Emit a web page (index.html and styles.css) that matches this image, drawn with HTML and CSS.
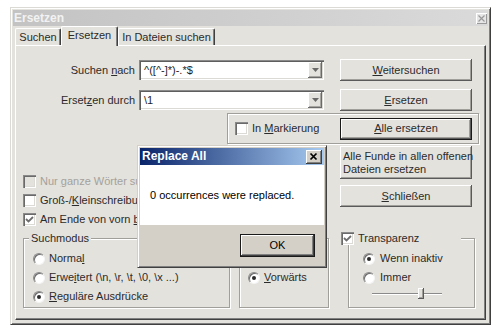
FILE: index.html
```html
<!DOCTYPE html>
<html lang="de">
<head>
	<meta charset="UTF-8">
	<title>Ersetzen</title>
	<link rel="stylesheet" href="styles.css">
</head>
<body>

	<!-- main window (inactive) -->
	<div class="window">
		<div class="titlebar">
			<span class="title">Ersetzen</span>
			<span class="title-close">
				<svg width="7" height="7" viewBox="0 0 7 7"><path d="M0.5 0.5 L6.5 6.5 M6.5 0.5 L0.5 6.5" stroke="#9a9a9a" stroke-width="1.2" fill="none"/></svg>
			</span>
		</div>

		<div class="tabs">
			<span class="tab tab-find">Suchen</span>
			<span class="tab tab-replace active">Ersetzen</span>
			<span class="tab tab-files">In Dateien suchen</span>
		</div>

		<div class="panel">

			<div class="row">
				<label class="label">Suchen <u>n</u>ach</label>
				<div class="combo">
					<span class="combo-text">^([^-]*)-.*$</span>
					<span class="combo-btn"><svg width="7" height="4" viewBox="0 0 7 4"><path d="M0 0 H7 L3.5 4 Z" fill="#6a6a6a"/></svg></span>
				</div>
				<button type="button" class="btn"><span><u>W</u>eitersuchen</span></button>
			</div>

			<div class="row">
				<label class="label">Erset<u>z</u>en durch</label>
				<div class="combo">
					<span class="combo-text">\1</span>
					<span class="combo-btn"><svg width="7" height="4" viewBox="0 0 7 4"><path d="M0 0 H7 L3.5 4 Z" fill="#6a6a6a"/></svg></span>
				</div>
				<button type="button" class="btn"><span><u>E</u>rsetzen</span></button>
			</div>

			<div class="mark">
				<span class="check-label">
					<span class="chk"></span>
					<span class="txt">In <u>M</u>arkierung</span>
				</span>
				<button type="button" class="btn default"><span><u>A</u>lle ersetzen</span></button>
			</div>

			<div class="mid">
				<!-- options are cut off by the message box -->
				<div class="opts">
					<div class="opt disabled">
						<span class="chk off"></span>
						<span class="txt">Nur <u>g</u>anze Wörter suchen</span>
					</div>
					<div class="opt">
						<span class="chk"></span>
						<span class="txt">Groß-/<u>K</u>leinschreibung beachten</span>
					</div>
					<div class="opt">
						<span class="chk checked"><svg width="9" height="9" viewBox="0 0 9 9"><path d="M1 4 L3.5 6.5 L8 2" stroke="#6e6e6e" stroke-width="1.8" fill="none"/></svg></span>
						<span class="txt">Am Ende von vorn <u>b</u>eginnen</span>
					</div>
				</div>
				<div class="side">
					<button type="button" class="btn btn-all"><span>Alle Funde in allen offenen<br>Dateien ersetzen</span></button>
					<button type="button" class="btn btn-close"><span><u>S</u>chließen</span></button>
				</div>
			</div>

			<div class="groups">
				<div class="group g-mode">
					<span class="legend">Suchmodus</span>
					<div class="radios">
						<div class="opt"><span class="radio"></span><span class="txt">Norma<u>l</u></span></div>
						<div class="opt"><span class="radio"></span><span class="txt">Erwe<u>i</u>tert (\n, \r, \t, \0, \x ...)</span></div>
						<div class="opt"><span class="radio on"></span><span class="txt"><u>R</u>eguläre Ausdrücke</span></div>
					</div>
				</div>

				<div class="group g-dir">
					<span class="legend"></span>
					<div class="radios">
						<div class="opt"></div>
						<div class="opt"><span class="radio on"></span><span class="txt"><u>V</u>orwärts</span></div>
					</div>
				</div>

				<div class="group g-trans">
					<span class="legend">
						<span class="chk checked"><svg width="9" height="9" viewBox="0 0 9 9"><path d="M1 4 L3.5 6.5 L8 2" stroke="#6e6e6e" stroke-width="1.8" fill="none"/></svg></span>
						<span class="txt">Transparenz</span>
					</span>
					<div class="radios">
						<div class="opt"><span class="radio on"></span><span class="txt">Wenn inaktiv</span></div>
						<div class="opt"><span class="radio"></span><span class="txt">Immer</span></div>
					</div>
					<div class="slider">
						<div class="slider-track"></div>
						<span class="slider-thumb"></span>
					</div>
				</div>
			</div>

		</div>
	</div>

	<!-- message box -->
	<div class="msgbox">
		<div class="msg-title">
			<span>Replace All</span>
			<span class="msg-close">
				<svg width="16" height="14" viewBox="0 0 16 14"><path d="M4.5 3.5 L10.5 9.5 M10.5 3.5 L4.5 9.5" stroke="#000" stroke-width="1.7" fill="none"/></svg>
			</span>
		</div>
		<div class="msg-body">0 occurrences were replaced.</div>
		<div class="msg-foot">
			<button type="button" class="btn default ok"><span>OK</span></button>
		</div>
	</div>

</body>
</html>
```

FILE: styles.css
```css
body{
	margin: 0;
	background: #fff;
	font-family: "Liberation Sans", Arial, sans-serif;
	font-size: 11px;
	line-height: 13px;
	color: #2b2b2b;
}
button{
	font: inherit;
	color: inherit;
	background: none;
	border: 0;
	padding: 0;
	margin: 0;
}
u{ text-decoration: underline; text-underline-offset: 1px; }

/* window frame */
.window{
	width: 481px;
	height: 318px;
	margin: 7px 0 0 10px;
	box-sizing: border-box;
	border: 1px solid;
	border-color: #dcdad5 #404040 #404040 #dcdad5;
	box-shadow: inset 1px 1px #fff, inset -1px -1px #808080;
	padding: 2px;
	background: #e4e2dd;
	display: flex;
	flex-direction: column;
}
.titlebar{
	flex: none;
	height: 16px;
	display: flex;
	align-items: center;
	justify-content: space-between;
	padding: 0 1px;
	background: linear-gradient(to right, #c3c3c3, #dadada);
}
.title{
	font-weight: bold;
	font-size: 12px;
	color: #f2f2f2;
}
.title-close{
	width: 11px;
	height: 11px;
	box-sizing: border-box;
	display: flex;
	align-items: center;
	justify-content: center;
	background: #e6e6e6;
	box-shadow: inset 1px 1px #fff, inset -1px -1px #9a9a9a;
}

/* tabs */
.tabs{
	flex: none;
	height: 19px;
	display: flex;
	align-items: flex-end;
	padding-left: 2px;
}
.tab{
	height: 17px;
	box-sizing: border-box;
	display: flex;
	align-items: center;
	justify-content: center;
	border-left: 1px solid #fff;
	border-top: 1px solid #fff;
	border-right: 1px solid #404040;
	box-shadow: inset -1px 0 #808080;
	border-radius: 2px 2px 0 0;
	white-space: nowrap;
}
.tab-find{ width: 46px; }
.tab-replace{
	width: 57px;
	height: 20px;
	margin-bottom: -1px;
	position: relative;
	z-index: 1;
	background: #e4e2dd;
	padding-bottom: 2px;
}
.tab-files{ width: 97px; }

.panel{
	flex: none;
	height: 275px;
	margin: 0 2px;
	box-sizing: border-box;
	border: 1px solid;
	border-color: #fff #404040 #404040 #fff;
	box-shadow: inset -1px -1px #808080;
	padding-top: 13px;
}

/* rows */
.row{
	display: flex;
	align-items: center;
	height: 22px;
}
.row + .row{ margin-top: 8px; }
.label{
	width: 119px;
	padding-right: 4px;
	text-align: right;
	white-space: nowrap;
}
.combo{
	width: 185px;
	height: 20px;
	box-sizing: border-box;
	margin-right: 16px;
	padding: 2px;
	background: #fff;
	display: flex;
	align-items: center;
	justify-content: space-between;
	box-shadow: inset 1px 1px #8a8a8a, inset 2px 2px #5e5e5e, inset -1px -1px #fff, inset -2px -2px #dcdad5;
}
.combo-text{ padding-left: 3px; color: #1e1e1e; }
.combo-btn{
	width: 14px;
	height: 16px;
	box-sizing: border-box;
	display: flex;
	align-items: center;
	justify-content: center;
	background: #e4e2dd;
	box-shadow: inset -1px -1px #6a6a6a, inset 1px 1px #fff, inset -2px -2px #a8a6a1;
}

/* buttons */
.btn{
	width: 132px;
	height: 22px;
	box-sizing: border-box;
	display: flex;
	align-items: center;
	justify-content: center;
	background: #e4e2dd;
	box-shadow: inset -1px -1px #5a5a5a, inset 1px 1px #fff, inset -2px -2px #a19f9a;
	white-space: nowrap;
}
.btn.default{ border: 1px solid #1a1a1a; }

.mark{
	margin: 2px 0 0 211px;
	width: 252px;
	height: 31px;
	box-sizing: border-box;
	border: 1px solid #a19f9a;
	box-shadow: inset 1px 1px #fff, 1px 1px #fff;
	display: flex;
	align-items: center;
	justify-content: space-between;
	padding: 0 6px 0 7px;
}
.check-label{ display: flex; align-items: center; }
.check-label .txt{ margin-left: 4px; }

/* checkbox / radio */
.chk{
	flex: none;
	width: 13px;
	height: 13px;
	box-sizing: border-box;
	display: flex;
	align-items: center;
	justify-content: center;
	background: #fff;
	box-shadow: inset 1px 1px #8a8a8a, inset 2px 2px #6a6a6a, inset -1px -1px #fff, inset -2px -2px #dcdad5;
}
.chk.off{ background: #e4e2dd; }
.radio{
	flex: none;
	position: relative;
	width: 12px;
	height: 12px;
	box-sizing: border-box;
	border-radius: 50%;
	background: #fff;
	border: 1px solid;
	border-color: #8a8a8a #f4f4f4 #f4f4f4 #8a8a8a;
	box-shadow: inset 1px 1px #6a6a6a;
}
.radio.on:after{
	content: '';
	position: absolute;
	left: 3px;
	top: 3px;
	width: 4px;
	height: 4px;
	border-radius: 50%;
	background: #2b2b2b;
}

/* middle */
.mid{
	display: flex;
	margin-top: 2px;
	height: 83px;
}
.opts{
	margin: 26px 203px 0 7px;
	width: 114px;
	overflow: hidden;
}
.opt{
	height: 19px;
	display: flex;
	align-items: center;
	white-space: nowrap;
}
.opt .txt{ margin-left: 4px; }
.opt.disabled{ color: #a3a19c; }
.side{ display: flex; flex-direction: column; }
.btn-all{
	height: 33px;
	justify-content: flex-start;
	padding-left: 3px;
	text-align: left;
}
.btn-close{ margin-top: 6px; }

/* group boxes */
.groups{
	display: flex;
	margin: 9px 0 0 7px;
}
.group{
	height: 70px;
	box-sizing: border-box;
	border: 1px solid #a19f9a;
	box-shadow: inset 1px 1px #fff, 1px 1px #fff;
	display: flex;
	flex-direction: column;
}
.legend{
	align-self: flex-start;
	height: 13px;
	margin: -7px 0 0 5px;
	padding: 0 2px;
	background: #e4e2dd;
	white-space: nowrap;
}
.radios{ margin-top: 4px; padding-left: 9px; }

.g-mode{ width: 207px; margin-right: 9px; }
.g-dir{ width: 90px; margin-right: 19px; }
.g-dir .radios{ padding-left: 8px; }
.g-trans{ width: 127px; }
.g-trans .legend{
	display: flex;
	align-items: center;
	width: 120px;
	margin-left: -8px;
	padding: 0;
}
.g-trans .legend .txt{ margin-left: 4px; }
.g-trans .radios{ padding-left: 14px; }
.g-trans .opt .txt{ margin-left: 5px; }

.slider{
	position: relative;
	width: 70px;
	height: 14px;
	margin-left: 23px;
}
.slider-track{
	margin-top: 6px;
	height: 0;
	border-top: 1px solid #8a8a8a;
	border-bottom: 1px solid #fff;
}
.slider-thumb{
	position: absolute;
	left: 46px;
	top: 1px;
	width: 6px;
	height: 11px;
	box-sizing: border-box;
	background: #e4e2dd;
	box-shadow: inset -1px -1px #5a5a5a, inset 1px 1px #fff, inset -2px -2px #a19f9a;
}

/* message box */
.msgbox{
	position: absolute;
	left: 137px;
	top: 145px;
	width: 190px;
	height: 123px;
	box-sizing: border-box;
	border: 1px solid;
	border-color: #d4d0c8 #404040 #404040 #d4d0c8;
	box-shadow: inset 1px 1px #fff, inset -1px -1px #808080;
	padding: 2px;
	background: #d4d0c8;
	display: flex;
	flex-direction: column;
	z-index: 5;
}
.msg-title{
	flex: none;
	height: 17px;
	display: flex;
	align-items: center;
	justify-content: space-between;
	padding: 0 2px;
	background: linear-gradient(to right, #0a246a, #a6caf0);
	color: #fff;
	font-weight: bold;
	font-size: 12px;
}
.msg-close{
	width: 16px;
	height: 14px;
	display: block;
	background: #d4d0c8;
	box-shadow: inset -1px -1px #404040, inset 1px 1px #fff, inset -2px -2px #808080;
}
.msg-close svg{ display: block; }
.msg-body{
	flex: none;
	height: 60px;
	box-sizing: border-box;
	padding: 24px 0 0 10px;
	background: #fff;
	color: #000;
}
.msg-foot{
	flex: 1;
	padding: 9px 0 0 100px;
}
.btn.ok{
	width: 75px;
	height: 23px;
	background: #d4d0c8;
	color: #000;
	box-shadow: inset -1px -1px #404040, inset 1px 1px #fff, inset -2px -2px #808080;
}
```
